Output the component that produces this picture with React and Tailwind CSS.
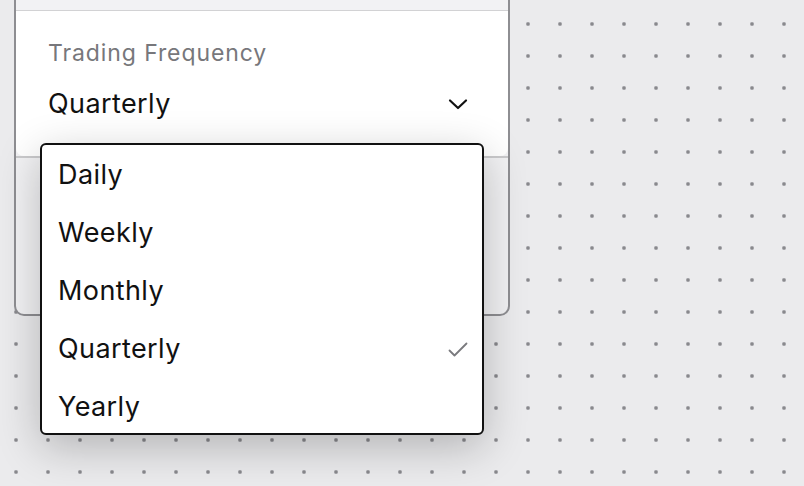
import React from "react";

const options = ["Daily", "Weekly", "Monthly", "Quarterly", "Yearly"];

const Chevron = () => (
  <svg width="20" height="12" viewBox="0 0 20 12" fill="none">
    <path d="M2 2.5l8 7.5 8-7.5" stroke="#111" strokeWidth="2.2" strokeLinecap="round" strokeLinejoin="round" />
  </svg>
);

const Check = () => (
  <svg width="20" height="16" viewBox="0 0 20 16" fill="none">
    <path d="M1.5 8.5l5 5L18.5 1.5" stroke="#7a7a7e" strokeWidth="1.8" strokeLinecap="round" strokeLinejoin="round" />
  </svg>
);

export default function App() {
  const selected = "Quarterly";

  return (
    <div
      className="relative w-[804px] h-[486px] overflow-hidden bg-[#ebebed] bg-[radial-gradient(circle_at_16px_16px,#7e7e82_0,#929296_1.3px,#c4c4c8_2px,transparent_2.5px)] bg-[size:32px_32px] bg-[position:0_8px]"
      style={{ fontFamily: "Inter, 'Noto Sans', sans-serif" }}
    >
      {/* settings card */}
      <div className="ml-[14px] w-[496px] border-x-2 border-b-2 border-[#8e8e92] rounded-b-[10px] bg-[#f2f2f4] overflow-hidden">
        <div className="h-[10px]" />
        <div className="h-px bg-[#d2d2d4]" />
        <div className="h-[145px] bg-white rounded-b-[8px] pl-[32px] pr-[40px] pt-[27px]">
          <div className="text-[23px] leading-[30px] text-[#77777b] tracking-[0.9px]">
            Trading Frequency
          </div>
          <div className="mt-[17px] flex items-center justify-between">
            <span className="text-[27px] leading-[38px] text-[#111] tracking-[0.4px]">{selected}</span>
            <Chevron />
          </div>
        </div>
        <div className="h-[2px] bg-[#cacacc]" />
        <div className="h-[156px]" />
      </div>

      {/* open menu */}
      <div className="absolute left-[40px] top-[143px] w-[444px] h-[292px] overflow-hidden border-2 border-[#111] rounded-[6px] bg-white shadow-[0_12px_44px_rgba(0,0,0,0.24)]">
        {options.map((opt) => (
          <div key={opt} className="h-[58px] pt-[3px] flex items-center justify-between pl-[16px] pr-[14px]">
            <span className="text-[27px] text-[#111] tracking-[0.4px]">{opt}</span>
            {opt === selected && <Check />}
          </div>
        ))}
      </div>
    </div>
  );
}
